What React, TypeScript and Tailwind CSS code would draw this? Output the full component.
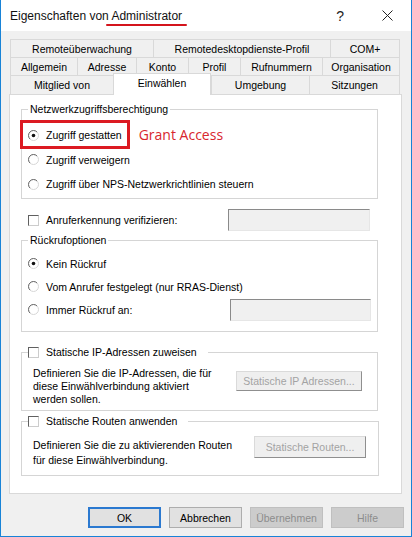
import React from 'react';

const Radio = ({ checked = false }: { checked?: boolean }) => (
  <svg width="11" height="11" viewBox="0 0 11 11" className="shrink-0">
    <circle cx="5.5" cy="5.5" r="5" fill="#ffffff" stroke="#d6d6d6" />
    <path d="M1.96 9.04 A5 5 0 0 1 9.04 1.96" fill="none" stroke="#6a6a6a" strokeWidth="1" />
    {checked && <circle cx="5.5" cy="5.5" r="1.8" fill="#111111" />}
  </svg>
);

const Check = () => (
  <span className="block w-[11px] h-[11px] shrink-0 bg-white border border-[#606060] border-r-[#cccccc] border-b-[#cccccc]" />
);

const Field = ({ w, h }: { w: string; h: string }) => (
  <span className={`block ${w} ${h} bg-[#f0f0f0] border border-[#8a8a8a] border-r-[#e6e6e6] border-b-[#e6e6e6]`} />
);

const Tab = ({ label, w, last = false }: { label: string; w: string; last?: boolean }) => (
  <div
    className={`${w} h-full flex items-center justify-center border-t border-l border-[#d9d9d9] ${
      last ? 'border-r' : ''
    }`}
  >
    {label}
  </div>
);

const App = () => {
  return (
    <div className="w-[412px] h-[537px] bg-[#f0f0f0] border-x border-b border-[#1883d7] flex flex-col font-['Liberation_Sans',Arial,sans-serif] text-[10.5px] leading-[12px] text-black overflow-hidden">
      {/* Title bar */}
      <div className="h-[31px] shrink-0 bg-white flex items-center pl-[9px]">
        <span className="text-[12px] leading-[14px] text-[#111]">
          Eigenschaften von{' '}
          <span className="relative">
            Administrator
            <span className="absolute left-[-5px] right-[-5px] top-[15px] h-[2px] rounded-full bg-[#d4141c]" />
          </span>
        </span>
        <span className="ml-auto text-[14px] leading-[14px] text-[#222] mr-[38px]">?</span>
        <svg width="11" height="11" viewBox="0 0 11 11" className="mr-[18px]">
          <path d="M0.5 0.5 L10.5 10.5 M10.5 0.5 L0.5 10.5" stroke="#222" strokeWidth="1" />
        </svg>
      </div>

      {/* Tabs */}
      <div className="mt-[8px] ml-[9px] w-[390px] flex flex-col text-[10.5px]">
        <div className="h-[18px] flex">
          <Tab label="Remoteüberwachung" w="w-[143px]" />
          <Tab label="Remotedesktopdienste-Profil" w="w-[177px]" />
          <Tab label="COM+" w="w-[70px]" last />
        </div>
        <div className="h-[18px] flex">
          <Tab label="Allgemein" w="w-[67px]" />
          <Tab label="Adresse" w="w-[59px]" />
          <Tab label="Konto" w="w-[52px]" />
          <Tab label="Profil" w="w-[52px]" />
          <Tab label="Rufnummern" w="w-[82px]" />
          <Tab label="Organisation" w="w-[78px]" last />
        </div>
        <div className="h-[19px] flex items-end">
          <Tab label="Mitglied von" w="w-[103px]" />
          <div className="relative z-10 w-[98px] h-[22px] mb-[-1px] bg-white flex items-center justify-center pb-[4px] border-t border-l border-r border-[#d9d9d9]">
            Einwählen
          </div>
          <Tab label="Umgebung" w="w-[98px]" />
          <Tab label="Sitzungen" w="w-[91px]" last />
        </div>
      </div>

      {/* Panel */}
      <div className="ml-[8px] w-[393px] h-[400px] shrink-0 bg-white border border-[#d9d9d9] flex flex-col">
        {/* Netzwerkzugriffsberechtigung */}
        <fieldset className="mt-[8px] ml-[11px] w-[357px] border border-[#d5d5d5] pb-[2px]">
          <legend className="ml-[6px] px-[2px] leading-[12px]">Netzwerkzugriffsberechtigung</legend>
          <div className="mt-[8px] flex flex-col pl-[6px]">
            <div className="relative h-[24px] flex items-center gap-[7px]">
              <span className="absolute left-[-8px] top-[-3px] w-[110px] h-[29px] border-[3px] border-[#dc1a22]" />
              <Radio checked />
              <span>Zugriff gestatten</span>
              <span className="ml-[10px] font-['Open_Sans',sans-serif] text-[14px] leading-[16px] text-[#d8262e]">
                Grant Access
              </span>
            </div>
            <div className="h-[25px] flex items-center gap-[7px]">
              <Radio />
              <span>Zugriff verweigern</span>
            </div>
            <div className="h-[24px] flex items-center gap-[7px]">
              <Radio />
              <span>Zugriff über NPS-Netzwerkrichtlinien steuern</span>
            </div>
          </div>
        </fieldset>

        {/* Anruferkennung */}
        <div className="mt-[10px] h-[22px] flex items-center pl-[18px]">
          <Check />
          <span className="ml-[7px]">Anruferkennung verifizieren:</span>
          <span className="ml-auto mr-[31px]">
            <Field w="w-[142px]" h="h-[22px]" />
          </span>
        </div>

        {/* Rückrufoptionen */}
        <fieldset className="mt-[3px] ml-[11px] w-[357px] border border-[#d5d5d5] pb-[10px]">
          <legend className="ml-[6px] px-[2px] leading-[12px]">Rückrufoptionen</legend>
          <div className="mt-[6px] flex flex-col pl-[6px]">
            <div className="h-[23px] flex items-center gap-[7px]">
              <Radio checked />
              <span>Kein Rückruf</span>
            </div>
            <div className="h-[23px] flex items-center gap-[7px]">
              <Radio />
              <span>Vom Anrufer festgelegt (nur RRAS-Dienst)</span>
            </div>
            <div className="h-[23px] flex items-center gap-[7px]">
              <Radio />
              <span>Immer Rückruf an:</span>
              <span className="ml-auto mr-[6px]">
                <Field w="w-[141px]" h="h-[22px]" />
              </span>
            </div>
          </div>
        </fieldset>

        {/* Statische IP-Adressen */}
        <fieldset className="mt-[14px] ml-[11px] w-[357px] border border-[#d5d5d5] pb-[4px]">
          <legend className="ml-[6px] pr-[11px] flex items-center gap-[7px] leading-[12px]">
            <Check />
            <span>Statische IP-Adressen zuweisen</span>
          </legend>
          <div className="mt-[9px] flex items-start pl-[11px] pr-[15px]">
            <div className="leading-[13px]">
              Definieren Sie die IP-Adressen, die für
              <br />
              diese Einwählverbindung aktiviert
              <br />
              werden sollen.
            </div>
            <button className="ml-auto mt-[4px] w-[126px] h-[20px] bg-[#efefef] text-[#a3a3a3] border border-[#dadada] border-r-[#8f8f8f] border-b-[#8f8f8f]">
              Statische IP Adressen...
            </button>
          </div>
        </fieldset>

        {/* Statische Routen */}
        <fieldset className="mt-[4px] ml-[11px] w-[358px] border border-[#d5d5d5] pb-[7px]">
          <legend className="ml-[6px] pr-[11px] flex items-center gap-[7px] leading-[12px]">
            <Check />
            <span>Statische Routen anwenden</span>
          </legend>
          <div className="mt-[9px] flex items-start pl-[11px] pr-[12px]">
            <div className="pt-[2px] leading-[15px]">
              Definieren Sie die zu aktivierenden Routen
              <br />
              für diese Einwählverbindung.
            </div>
            <button className="ml-auto w-[112px] h-[22px] bg-[#efefef] text-[#a3a3a3] border border-[#dadada] border-r-[#8f8f8f] border-b-[#8f8f8f]">
              Statische Routen...
            </button>
          </div>
        </fieldset>
      </div>

      {/* Dialog buttons */}
      <div className="mt-[13px] flex justify-end gap-[8px] pr-[7px]">
        <button className="w-[73px] h-[21px] bg-[#e1e1e1] border-2 border-[#2b79d0]">OK</button>
        <button className="w-[73px] h-[21px] bg-[#e1e1e1] border border-[#adadad]">Abbrechen</button>
        <button className="w-[73px] h-[21px] bg-[#cccccc] border border-[#bfbfbf] text-[#8c8c8c]">Übernehmen</button>
        <button className="w-[73px] h-[21px] bg-[#cccccc] border border-[#bfbfbf] text-[#8c8c8c]">Hilfe</button>
      </div>
    </div>
  );
};

export default App;
